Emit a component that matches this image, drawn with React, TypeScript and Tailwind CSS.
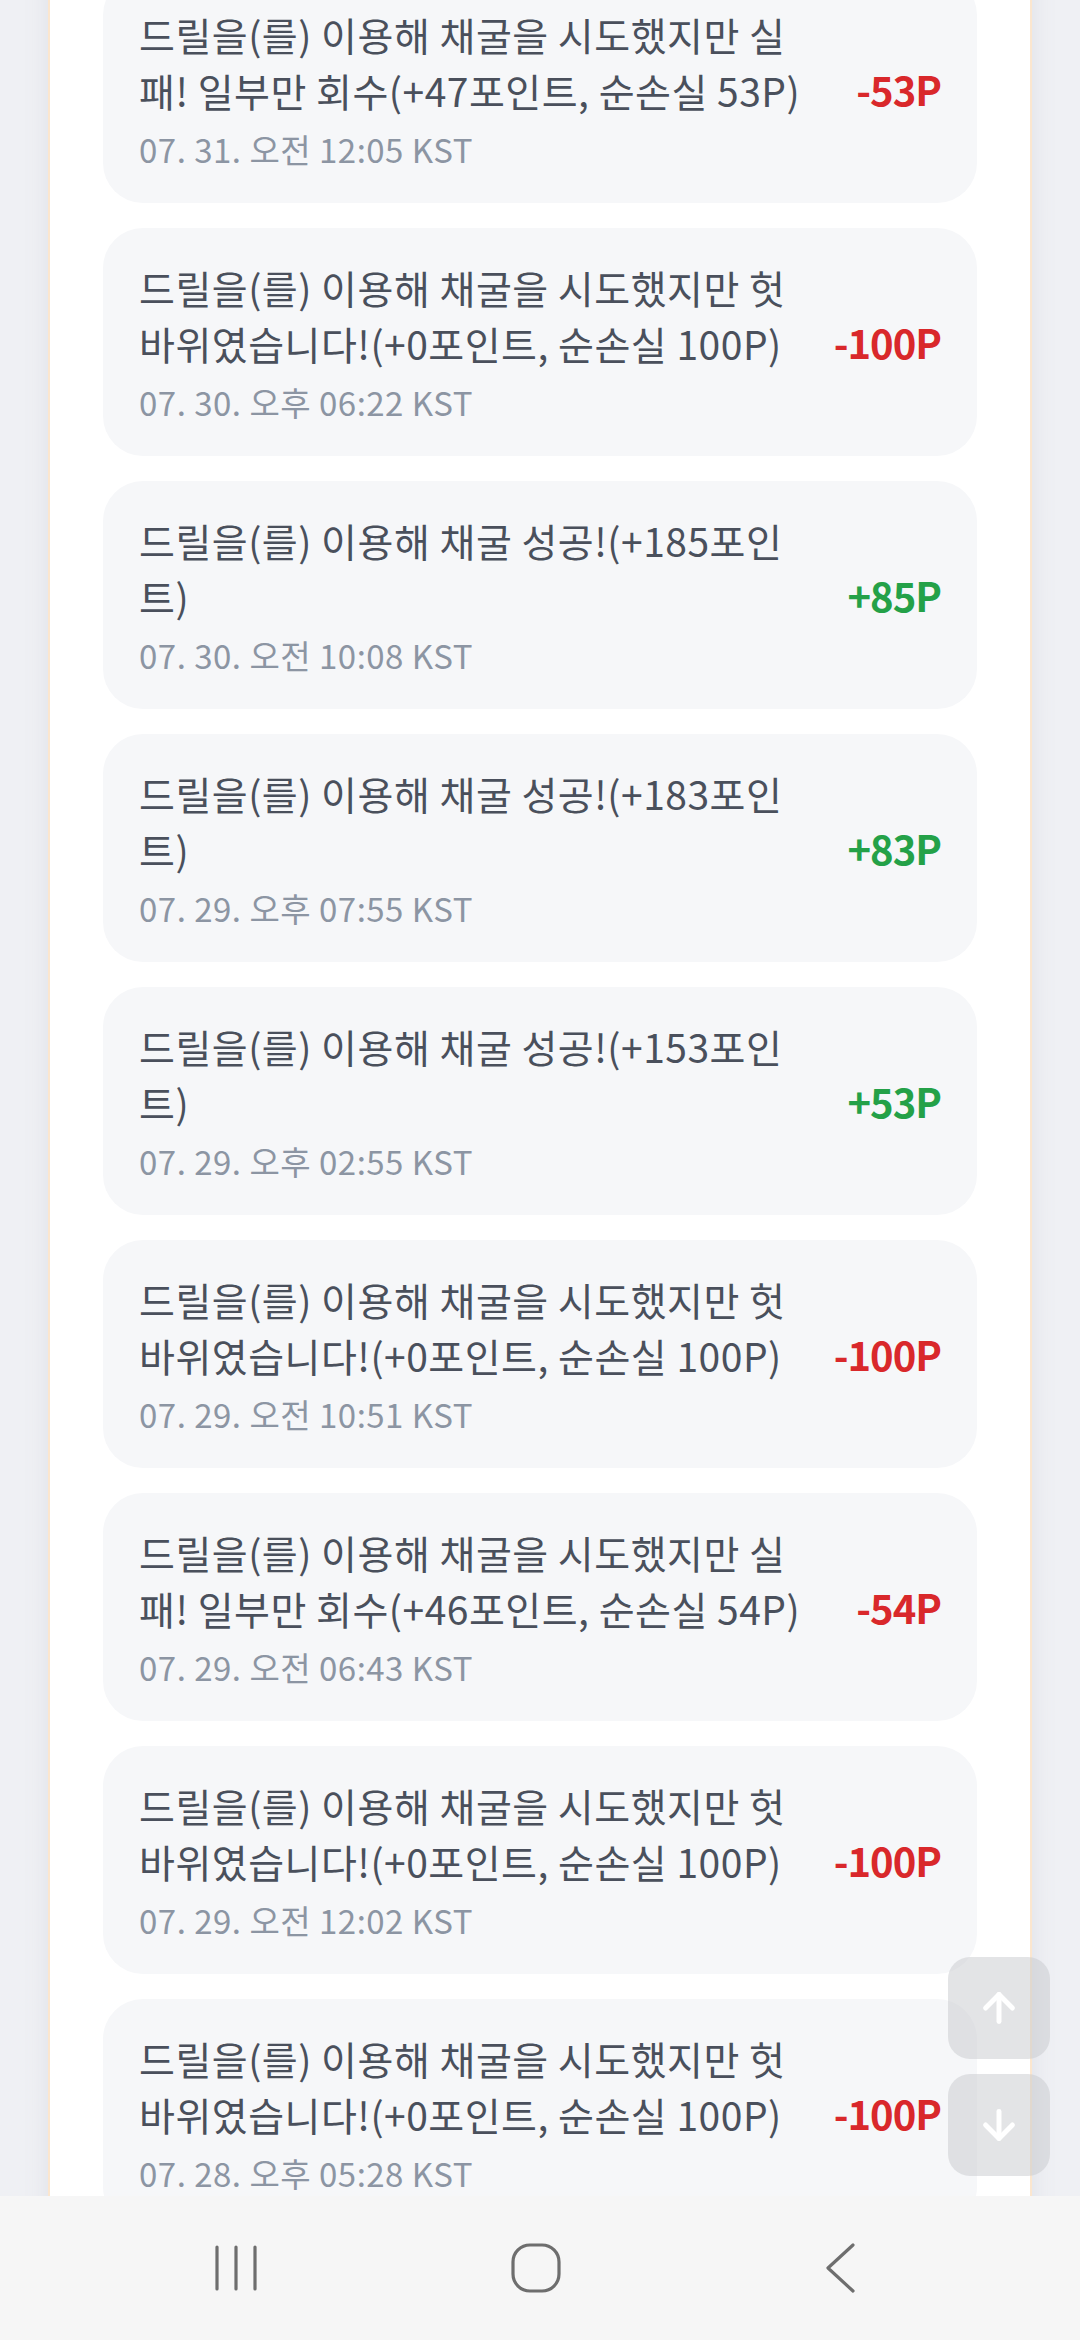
import { ArrowUp, ArrowDown } from "lucide-react";

const FAIL = "드릴을(를) 이용해 채굴을 시도했지만 헛바위였습니다!(+0포인트, 순손실 100P)";

const logs = [
    { text: "드릴을(를) 이용해 채굴을 시도했지만 실패! 일부만 회수(+47포인트, 순손실 53P)", date: "07. 31. 오전 12:05 KST", amount: "-53P" },
    { text: FAIL, date: "07. 30. 오후 06:22 KST", amount: "-100P" },
    { text: "드릴을(를) 이용해 채굴 성공!(+185포인트)", date: "07. 30. 오전 10:08 KST", amount: "+85P" },
    { text: "드릴을(를) 이용해 채굴 성공!(+183포인트)", date: "07. 29. 오후 07:55 KST", amount: "+83P" },
    { text: "드릴을(를) 이용해 채굴 성공!(+153포인트)", date: "07. 29. 오후 02:55 KST", amount: "+53P" },
    { text: FAIL, date: "07. 29. 오전 10:51 KST", amount: "-100P" },
    { text: "드릴을(를) 이용해 채굴을 시도했지만 실패! 일부만 회수(+46포인트, 순손실 54P)", date: "07. 29. 오전 06:43 KST", amount: "-54P" },
    { text: FAIL, date: "07. 29. 오전 12:02 KST", amount: "-100P" },
    { text: FAIL, date: "07. 28. 오후 05:28 KST", amount: "-100P" },
];

export default function App() {
    return (
        <div
            className="relative flex h-[2340px] w-[1080px] flex-col overflow-hidden bg-[#eff0f4]"
            style={{ fontFamily: '"Noto Sans CJK KR", "Noto Sans", sans-serif' }}
        >
            <div className="flex-1 overflow-hidden">
                <div className="mx-[48px] border-x-2 border-[#fbe6cf] bg-white px-[53px] shadow-[0_0_24px_rgba(120,130,150,0.12)]">
                    <ul className="-mt-[25px] flex flex-col gap-[25px]">
                        {logs.map((l, i) => (
                            <li
                                key={i}
                                className="flex h-[228px] items-center gap-10 rounded-[40px] bg-[#f6f7f9] px-[36px]"
                            >
                                <div className="min-w-0 flex-1">
                                    <p className="text-[39px] leading-[56px] tracking-[0.5px] text-[#4a505c]">
                                        {l.text}
                                    </p>
                                    <p className="mt-[8px] text-[33px] leading-[46px] tracking-[0.5px] text-[#8c95a3]">
                                        {l.date}
                                    </p>
                                </div>
                                <span
                                    className={
                                        l.amount.startsWith("+")
                                            ? "shrink-0 text-[40px] font-bold tracking-[-1px] text-[#24a148]"
                                            : "shrink-0 text-[40px] font-bold tracking-[-1px] text-[#d9282b]"
                                    }
                                >
                                    {l.amount}
                                </span>
                            </li>
                        ))}
                    </ul>
                </div>
            </div>

            <div className="absolute right-[30px] top-[1957px] flex flex-col gap-[15px]">
                <button className="flex h-[102px] w-[102px] items-center justify-center rounded-[22px] bg-[#c8c9ce]/50">
                    <ArrowUp size={46} strokeWidth={2.6} color="#ffffff" />
                </button>
                <button className="flex h-[102px] w-[102px] items-center justify-center rounded-[22px] bg-[#c8c9ce]/50">
                    <ArrowDown size={46} strokeWidth={2.6} color="#ffffff" />
                </button>
            </div>

            <nav className="flex h-[144px] shrink-0 items-center bg-[#f6f6f6] pl-[86px]">
                <div className="flex w-[300px] justify-center">
                    <svg width="46" height="48" viewBox="0 0 46 48" fill="none" stroke="#6e6e6e" strokeWidth="3.2" strokeLinecap="round">
                        <path d="M4 3v42M23 3v42M42 3v42" />
                    </svg>
                </div>
                <div className="flex w-[300px] justify-center">
                    <svg width="50" height="50" viewBox="0 0 50 50" fill="none" stroke="#6e6e6e" strokeWidth="3.2">
                        <rect x="2" y="2" width="46" height="46" rx="17" />
                    </svg>
                </div>
                <div className="flex w-[300px] justify-center pl-[8px]">
                    <svg width="32" height="50" viewBox="0 0 32 50" fill="none" stroke="#6e6e6e" strokeWidth="3.2" strokeLinecap="round" strokeLinejoin="round">
                        <path d="M29 2L4 25l25 23" />
                    </svg>
                </div>
            </nav>
        </div>
    );
}
